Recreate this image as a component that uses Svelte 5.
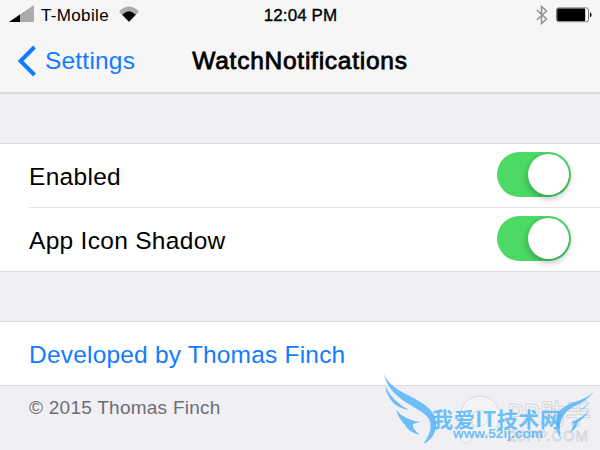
<script>
  let settings = $state([
    { label: "Enabled", on: true },
    { label: "App Icon Shadow", on: true },
  ]);
</script>

<main>
  <header>
    <div class="status">
      <div class="carrier">
        <svg class="signal" width="26" height="18" viewBox="0 0 26 18">
          <path d="M0 17 25 0V17Z" fill="#ababab" />
          <path d="M0 17 11 9.5V17Z" fill="#000" />
        </svg>
        <span class="network">T-Mobile</span>
        <svg width="20" height="16" viewBox="0 0 20 16">
          <path d="M0 5.5Q10-4.7 20 5.5L10 16Z" fill="#ababab" />
          <path d="M3.2 8.8Q10 1.8 16.8 8.8L10 15.8Z" fill="#000" />
        </svg>
      </div>
      <span class="time">12:04 PM</span>
      <div class="indicators">
        <svg width="12" height="20" viewBox="0 0 12 20" fill="none" stroke="#919191" stroke-width="1.5">
          <path d="M.8 5 10.5 14 5.5 18.5V1.5L10.5 6 .8 15" />
        </svg>
        <svg class="battery" width="36" height="16" viewBox="0 0 36 16">
          <rect x=".5" y=".9" width="32" height="13.8" rx="2.2" fill="#fff" stroke="#777" />
          <rect x="1.2" y="1.6" width="28" height="12.4" rx="1" fill="#000" />
          <path d="M34 5.5h.5q1 .5 1 2.3t-1 2.3H34Z" fill="#000" />
        </svg>
      </div>
    </div>
    <nav>
      <button class="back">
        <svg width="19" height="32" viewBox="0 0 19 32">
          <path d="M16.5 2 2.5 16 16.5 30" fill="none" stroke="#127bff" stroke-width="4" />
        </svg>
        <span>Settings</span>
      </button>
      <h1>WatchNotifications</h1>
    </nav>
  </header>

  <section class="group toggles">
    {#each settings as item}
      <div class="row">
        <span class="label">{item.label}</span>
        <button
          class="switch"
          class:on={item.on}
          aria-label={item.label}
          onclick={() => (item.on = !item.on)}
        >
          <span class="knob"></span>
        </button>
      </div>
    {/each}
  </section>

  <section class="group">
    <div class="row">
      <span class="link">Developed by Thomas Finch</span>
    </div>
  </section>
  <footer>© 2015 Thomas Finch</footer>

  <svg class="watermark" width="230" height="80" viewBox="370 370 230 80">
    <g class="gray">
      <path d="M460 437V416a20 20 0 1 1 21 20q-5 0-9-2v4q-1 5-6 5t-6-6Z" />
      <path d="M472 418a8 8 0 1 1 8 8h-8Z" />
      <text class="brand" x="507" y="424" font-size="27" textLength="84" lengthAdjust="spacingAndGlyphs">PP助手</text>
      <text x="508" y="441" font-size="15" textLength="80">25PP.COM</text>
    </g>
    <g class="blue">
      <path d="M384 374C391 390 407 393 422 403Q438 413 436 428Q433 440 423 444Q434 430 429 419C421 406 390 402 384 374Z" />
      <path d="M385 386Q393 402 409 410Q389 407 385 386Z" />
      <path d="M396 410Q405 420 420 422L413 424Q412 429 420 435Q408 432 405 425Q399 419 396 410Z" />
      <path d="M594 391Q587 401 575 406Q555 416 561 439Q552 425 559 412Q564 405 575 402Q588 398 594 391Z" />
      <path d="M590 401Q586 407 577 411Q586 409 590 401Z" />
      <path d="M589 410Q585 418 578 422Q577 428 570 433L574 424L571 422Q583 418 589 410Z" />
      <text class="cn" x="432" y="427" font-size="21" textLength="129">我爱IT技术网</text>
      <text class="url" x="453" y="438" font-size="12" textLength="90" lengthAdjust="spacingAndGlyphs">www.52ij.com</text>
    </g>
  </svg>
</main>

<style>
  :global(body) {
    margin: 0;
    background: #efeff4;
  }

  main {
    position: relative;
    width: 600px;
    height: 450px;
    overflow: hidden;
    background: #efeff4;
    color: #000;
    font-family: "Liberation Sans", Arial, sans-serif;
    font-size: 24.5px;
  }

  button {
    padding: 0;
    border: 0;
    background: none;
    font: inherit;
  }

  svg {
    display: block;
    flex: none;
  }

  header {
    box-sizing: border-box;
    height: 94px;
    border-bottom: 2px solid #dcdcde;
    background: #f6f6f6;
  }

  .status {
    display: grid;
    grid-template-columns: 1fr auto 1fr;
    align-items: center;
    height: 30px;
    padding: 0 8px 0 9px;
    font-size: 17px;
  }

  .carrier {
    display: flex;
    align-items: center;
  }

  .signal {
    margin: -3px 6px 0 0;
  }

  .network {
    margin: 1px 10px 0 0;
    letter-spacing: 0.35px;
  }

  .carrier svg:last-child {
    margin-top: -3px;
  }

  .time {
    margin-top: 1px;
    letter-spacing: 0.1px;
    -webkit-text-stroke: 0.35px #000;
  }

  .indicators {
    display: flex;
    align-items: center;
    justify-content: flex-end;
    gap: 8px;
  }

  nav {
    display: grid;
    grid-template-columns: 1fr auto 1fr;
    align-items: center;
    height: 62px;
    padding: 0 18px;
  }

  .back {
    display: flex;
    align-items: center;
    gap: 8px;
    color: #127bff;
    letter-spacing: 0.2px;
  }

  h1 {
    margin: 0;
    font-size: 24.5px;
    font-weight: 400;
    letter-spacing: 0.75px;
    -webkit-text-stroke: 0.8px #000;
  }

  .group {
    margin-top: 49px;
    padding-left: 29px;
    border-top: 1px solid #dcdce0;
    border-bottom: 1px solid #dcdce0;
    background: #fff;
  }

  .row {
    display: flex;
    align-items: center;
    justify-content: space-between;
    height: 63px;
    padding-right: 29px;
  }

  .row + .row {
    border-top: 1px solid #e2e2e5;
  }

  .label {
    margin-top: 2px;
    letter-spacing: 0.3px;
  }

  .switch {
    width: 74px;
    height: 45px;
    margin-bottom: 2px;
    padding: 2px;
    border-radius: 23px;
    background: #ddd;
  }

  .switch.on {
    background: #4cd964;
  }

  .knob {
    display: block;
    width: 41px;
    height: 41px;
    border-radius: 50%;
    background: #fff;
    box-shadow: 0 3px 7px rgba(0, 0, 0, 0.3);
  }

  .on .knob {
    margin-left: 29px;
  }

  .link {
    margin-top: 2px;
    color: #127bff;
    letter-spacing: 0.2px;
  }

  footer {
    padding: 11px 29px;
    color: #6d6d72;
    font-size: 19px;
    letter-spacing: 0.25px;
  }

  .watermark {
    position: absolute;
    right: 0;
    bottom: 0;
    font-family: "Liberation Sans", "Noto Sans CJK SC", sans-serif;
  }

  .gray {
    fill: #f4f4f6;
    stroke: #d3d3d7;
    stroke-width: 0.8;
  }

  .brand {
    font-family: "Noto Sans CJK SC", sans-serif;
    font-weight: 500;
  }

  .blue {
    fill: #4db5fa;
    fill-opacity: 0.82;
  }

  .cn {
    font-family: "Noto Sans CJK SC", sans-serif;
    font-weight: 700;
  }

  .url {
    font-weight: 700;
  }
</style>
